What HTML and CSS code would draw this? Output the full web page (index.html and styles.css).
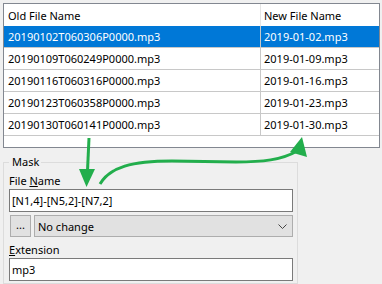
FILE: index.html
```html
<!DOCTYPE html>
<html lang="en">
<head>
    <meta charset="UTF-8">
    <title>Rename Files</title>
    <link rel="stylesheet" href="styles.css">
</head>
<body>
    <div class="files">
        <table>
            <tr>
                <th class="old">Old File Name</th>
                <th class="new">New File Name</th>
            </tr>
            <tr class="sel">
                <td class="old">20190102T060306P0000.mp3</td>
                <td class="new">2019-01-02.mp3</td>
            </tr>
            <tr>
                <td class="old">20190109T060249P0000.mp3</td>
                <td class="new">2019-01-09.mp3</td>
            </tr>
            <tr>
                <td class="old">20190116T060316P0000.mp3</td>
                <td class="new">2019-01-16.mp3</td>
            </tr>
            <tr>
                <td class="old">20190123T060358P0000.mp3</td>
                <td class="new">2019-01-23.mp3</td>
            </tr>
            <tr>
                <td class="old">20190130T060141P0000.mp3</td>
                <td class="new">2019-01-30.mp3</td>
            </tr>
        </table>
    </div>

    <fieldset class="mask">
        <legend>Mask</legend>
        <div class="label">File <span class="key">N</span>ame</div>
        <input class="box" type="text" value="[N1,4]-[N5,2]-[N7,2]">
        <div class="row">
            <button class="dots">...</button>
            <div class="combo">
                <span>No change</span>
                <svg width="9" height="5" viewBox="0 0 9 5"><polyline points="0.5,0.5 4.5,4.5 8.5,0.5" fill="none" stroke="#444" stroke-width="1"/></svg>
            </div>
        </div>
        <div class="label ext"><span class="key">E</span>xtension</div>
        <input class="box" type="text" value="mp3">
    </fieldset>

    <!-- green hint arrows drawn over the form -->
    <svg class="arrows" width="382" height="284" viewBox="0 0 382 284">
        <path d="M89 138 L87.5 171" fill="none" stroke="#22ae4c" stroke-width="3"/>
        <polygon points="79,169 95,169 86.5,187" fill="#22ae4c"/>
        <path d="M100 184 C110 167 132 161 172 161 L236 162 C262 162 282 160 297 151" fill="none" stroke="#22ae4c" stroke-width="3"/>
        <polygon points="302,137 290,152 307,157" fill="#22ae4c"/>
    </svg>
</body>
</html>
```

FILE: styles.css
```css
body {
    margin: 0;
    padding: 3px 0 0 3px;
    width: 382px;
    height: 284px;
    box-sizing: border-box;
    overflow: hidden;
    background: #f0f0f0;
    font-family: "Noto Sans", sans-serif;
    font-size: 11px;
    color: #000;
    position: relative;
}
.files {
    width: 377px;
    height: 145px;
    box-sizing: border-box;
    border: 1px solid #828790;
    background: #fff;
    overflow: hidden;
}
.files table {
    border-collapse: separate;
    border-spacing: 0;
    width: 100%;
}
.files th {
    height: 22px;
    padding: 0 0 0 4px;
    font-weight: normal;
    text-align: left;
    box-sizing: border-box;
}
.files th.new {
    border-left: 1px solid #e5e5e5;
    padding-left: 3px;
}
.files td {
    height: 22px;
    padding: 0 0 0 4px;
    box-sizing: border-box;
    border-bottom: 1px solid #c8c8c8;
    white-space: nowrap;
}
.files .old {
    width: 256px;
}
.files td.new {
    border-left: 1px solid #c8c8c8;
    padding-left: 3px;
}
.files tr.sel td {
    background: #0078d7;
    color: #fff;
}
.mask {
    margin: 6px 0 0 0;
    width: 295px;
    box-sizing: border-box;
    border: 1px solid #dcdcdc;
    padding: 0 4px 2px 5px;
    min-inline-size: 0;
}
.mask legend {
    padding: 0 2px 0 3px;
    line-height: 16px;
}
.label {
    margin-top: 2px;
    line-height: 17px;
}
.label.ext {
    margin-top: 4px;
}
.key {
    text-decoration: underline;
}
.box {
    display: block;
    width: 100%;
    height: 23px;
    box-sizing: border-box;
    margin: 0;
    border: 1px solid #7a7a7a;
    padding: 0 2px;
    background: #fff;
    font-family: inherit;
    font-size: 11px;
    color: #000;
    outline: none;
}
.row {
    display: flex;
    margin-top: 3px;
    height: 22px;
}
.dots {
    width: 21px;
    height: 22px;
    margin: 0 0 0 1px;
    padding: 0 0 3px 0;
    border: 1px solid #adadad;
    background: #e1e1e1;
    font-family: inherit;
    font-size: 11px;
    color: #000;
}
.combo {
    flex: 1;
    margin-left: 3px;
    display: flex;
    align-items: center;
    justify-content: space-between;
    padding: 0 5px 0 3px;
    border: 1px solid #adadad;
    background: #e1e1e1;
}
.combo svg {
    display: block;
}
.arrows {
    position: absolute;
    left: 0;
    top: 0;
    pointer-events: none;
}
```
